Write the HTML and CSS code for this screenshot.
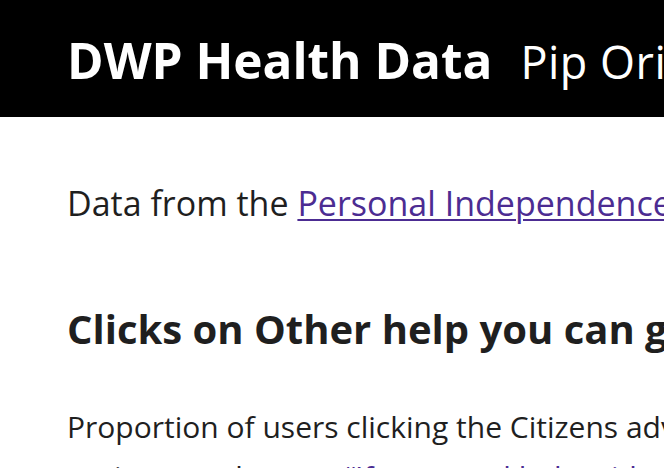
FILE: index.html
```html
<!DOCTYPE html>
<html lang="en">
<head>
<meta charset="utf-8">
<title>DWP Health Data</title>
<link rel="stylesheet" href="styles.css">
</head>
<body>
<header class="site-header">
  <div class="header-inner">
    <span class="brand">DWP Health Data</span>
    <span class="service">Pip Origination Journey</span>
  </div>
</header>
<main class="main">
  <p class="lead">Data from the <a class="link" href="#">Personal Independence Payment</a> online journey.</p>
  <h2 class="heading">Clicks on Other help you can get</h2>
  <p class="body">Proportion of users clicking the Citizens advice link or the other options on the new <a class="link" href="#">“If you need help with your claim”</a> section of the page.</p>
</main>
</body>
</html>
```
FILE: styles.css
```css
html, body {
  margin: 0;
  padding: 0;
  background: #ffffff;
}
body {
  font-family: "Open Sans", "Noto Sans", sans-serif;
  color: #1f1f1f;
  overflow: hidden;
  width: 664px;
  height: 468px;
}
.site-header {
  background: #000000;
  color: #ffffff;
  height: 117px;
  box-sizing: border-box;
  padding-left: 67px;
  white-space: nowrap;
  overflow: hidden;
}
.header-inner {
  display: flex;
  align-items: baseline;
  gap: 28px;
  padding-top: 28px;
}
.brand {
  font-weight: 700;
  font-size: 49.5px;
  line-height: 64px;
}
.service {
  font-weight: 400;
  font-size: 45px;
  letter-spacing: 0.5px;
  line-height: 64px;
}
.main {
  padding-left: 67px;
  width: 1200px;
}
.lead {
  margin: 62px 0 0;
  font-size: 34px;
  line-height: 48px;
}
.heading {
  margin: 76px 0 0;
  font-size: 40px;
  font-weight: 700;
  line-height: 52px;
}
.body {
  margin: 47px 0 0;
  font-size: 30px;
  line-height: 50px;
  width: 900px;
}
.link {
  color: #4c2c92;
  text-decoration: underline;
  text-decoration-thickness: 2px;
  text-underline-offset: 3px;
}
```
